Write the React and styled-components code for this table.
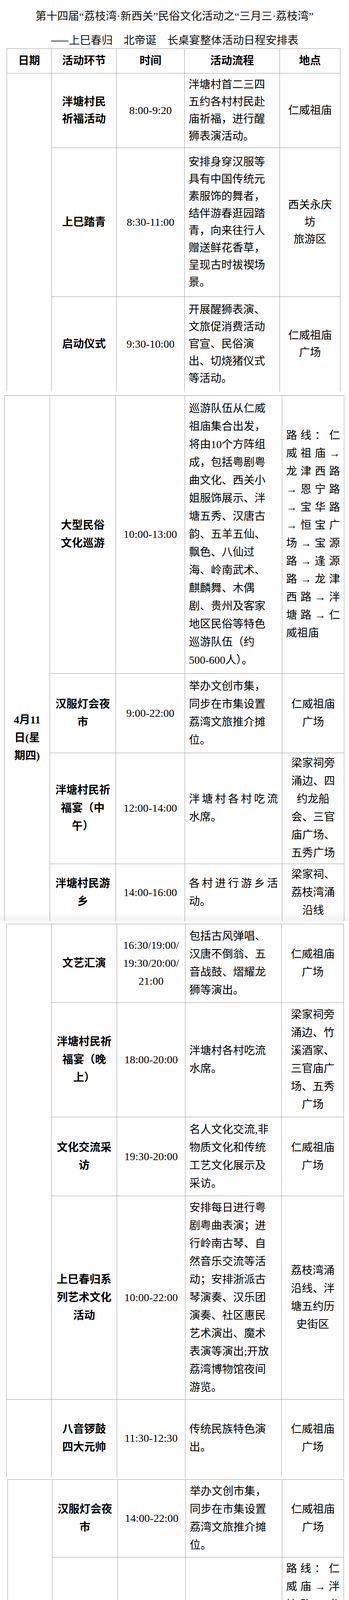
import React from 'react';
import styled, { createGlobalStyle, css } from 'styled-components';

const GlobalStyle = createGlobalStyle`
  html, body {
    margin: 0;
    padding: 0;
    background: #fff;
  }
  body {
    font-family: "Liberation Serif", "Noto Sans CJK SC", sans-serif;
    color: #000;
  }
`;

const j = (t) => ({ t, j: true });

const flowInterview = ['名人文化交流,非', '物质文化和传统', '工艺文化展示及', '采访。'];
const renwei = ['仁威祖庙', '广场'];
const routeSmall = ['路线：仁', '威庙→泮', '塘路→龙', '津桥→荔', '枝湾涌→', '至善桥→', '荔园→五', '秀桥→荔', '湾湖公园', '东门→泮', '塘路→仁'];

// 每一页是一段表格（原文档分页处断开）
const segments = [
  {
    gap: 0, left: 17, lh: 44, open: true, header: true,
    cols: [114, 167, 174, 244, 155],
    groups: [
      {
        rows: [
          { h: 191, step: ['泮塘村民', '祈福活动'], time: ['8:00-9:20'], flow: ['泮塘村首二三四', '五约各村村民赴', '庙祈福，进行醒', '狮表演活动。'], place: ['仁威祖庙'] },
          { h: 381, step: ['上巳踏青'], time: ['8:30-11:00'], flow: ['安排身穿汉服等', '具有中国传统元', '素服饰的舞者，', '结伴游春逛园踏', '青，向来往行人', '赠送鲜花香草，', '呈现古时祓禊场', '景。'], place: ['西关永庆', '坊', '旅游区'] },
          { h: 242, step: ['启动仪式'], time: ['9:30-10:00'], flow: ['开展醒狮表演、', '文旅促消费活动', '官宣、民俗演', '出、切烧猪仪式', '等活动。'], place: renwei },
        ],
      },
    ],
  },
  {
    gap: 10, left: 11, lh: 46, open: true, shade: true,
    cols: [116, 169, 177, 249, 159],
    groups: [
      {
        label: ['4月11', '日(星', '期四)'], pad: 807,
        rows: [
          {
            h: 712, step: ['大型民俗', '文化巡游'], time: ['10:00-13:00'],
            flow: ['巡游队伍从仁威', '祖庙集合出发，', '将由10个方阵组', '成，包括粤剧粤', '曲文化、西关小', '姐服饰展示、泮', '塘五秀、汉唐古', '韵、五羊五仙、', '飘色、八仙过', '海、岭南武术、', '麒麟舞、木偶', '剧、贵州及客家', '地区民俗等特色', '巡游队伍（约', '500-600人）。'],
            place: [j('路线：仁'), j('威祖庙→'), j('龙津西路'), j('→恩宁路'), j('→宝华路'), j('→恒宝广'), j('场→宝源'), j('路→逢源'), j('路→龙津'), j('西路→泮'), j('塘路→仁'), '威祖庙'],
            placeAlign: 'left',
          },
          { h: 203, step: ['汉服灯会夜', '市'], time: ['9:00-22:00'], flow: ['举办文创市集，', '同步在市集设置', '荔湾文旅推介摊', '位。'], place: renwei },
          { h: 284, step: ['泮塘村民祈', '福宴（中', '午）'], time: ['12:00-14:00'], flow: [j('泮塘村各村吃流'), '水席。'], place: ['梁家祠旁', '涌边、四', '约龙船', '会、三官', '庙广场、', '五秀广场'] },
          { h: 147, step: ['泮塘村民游', '乡'], time: ['14:00-16:00'], flow: [j('各村进行游乡活'), '动。'], place: ['梁家祠、', '荔枝湾涌', '沿线'] },
        ],
      },
    ],
  },
  {
    gap: 7, left: 16, lh: 46, open: true,
    cols: [115, 168, 175, 247, 159],
    groups: [
      {
        rows: [
          { h: 201, step: ['文艺汇演'], time: ['16:30/19:00/', '19:30/20:00/', '21:00'], flow: ['包括古风弹唱、', '汉唐不倒翁、五', '音战鼓、熠耀龙', '狮等演出。'], place: renwei },
          { h: 293, step: ['泮塘村民祈', '福宴（晚', '上）'], time: ['18:00-20:00'], flow: ['泮塘村各村吃流', '水席。'], place: ['梁家祠旁', '涌边、竹', '溪酒家、', '三官庙广', '场、五秀', '广场'] },
          { h: 202, step: ['文化交流采', '访'], time: ['19:30-20:00'], flow: flowInterview, place: renwei },
          { h: 521, step: ['上巳春归系', '列艺术文化', '活动'], time: ['10:00-22:00'], flow: ['安排每日进行粤', '剧粤曲表演；进', '行岭南古琴、自', '然音乐交流等活', '动；安排浙派古', '琴演奏、汉乐团', '演奏、社区惠民', '艺术演出、魔术', '表演等演出;开放', '荔湾博物馆夜间', '游览。'], place: ['荔枝湾涌', '沿线、泮', '塘五约历', '史街区'] },
        ],
      },
      {
        rows: [
          { h: 199, step: ['八音锣鼓', '四大元帅'], time: ['11:30-12:30'], flow: ['传统民族特色演', '出。'], place: renwei },
        ],
      },
    ],
  },
  {
    gap: 5, left: 19, lh: 46, open: true,
    cols: [114, 168, 174, 247, 158],
    groups: [
      {
        label: ['4月12', '日(星', '期五)'], pad: 873,
        rows: [
          { h: 199, step: ['汉服灯会夜', '市'], time: ['14:00-22:00'], flow: ['举办文创市集，', '同步在市集设置', '荔湾文旅推介摊', '位。'], place: renwei },
          {
            h: 566, step: ['小型民俗', '文化巡游'], time: ['14:30-16:00'], flow: ['三月三北帝诞传', '统文化巡游。', '（约150人）'],
            place: [...routeSmall.map(j), '威庙'], placeAlign: 'left',
          },
          { h: 294, step: ['文艺汇演'], time: ['16:00/18:00/', '19:00/19:20/', '20:00/21:00'], flow: ['包括八音锣鼓、', '新中式弹唱、汉', '唐不倒翁、五音', '战鼓、熠耀龙', '狮、敦煌舞蹈等', '演出。'], place: renwei },
          { h: 289, step: ['上巳春归长', '桌宴'], time: ['18:30-21:00'], flow: ['举办上巳春归长', '桌宴，搭建长桌', '宴空间，传承“聚', '宗亲，商族事，', '祈丰收，保平安”', '的传统风俗。'], place: ['泮塘五约', '街区'] },
        ],
      },
    ],
  },
  {
    gap: 8, left: 10, lh: 46, open: true,
    cols: [115, 171, 177, 249, 160],
    groups: [
      {
        rows: [
          { h: 202, step: ['文化交流采', '访'], time: ['19:30-20:00'], flow: flowInterview, place: renwei },
          { h: 527, step: ['上巳春归系', '列', '艺术文化活', '动'], time: ['10:00-22:00'], flow: ['安排每日三场粤', '剧粤曲表演；进', '行岭南古琴、自', '然音乐交流等活', '动；安排浙派古', '琴演奏、汉乐团', '演奏、社区惠民', '艺术演出、魔术', '表演等演出;开放', '荔湾博物馆夜间', '游览。'], place: ['荔枝湾涌', '沿线、泮', '塘五约历', '史街区'] },
        ],
      },
      {
        rows: [
          { h: 199, step: ['八音锣鼓', '四大元帅'], time: ['10:30-12:00'], flow: ['传统民族特色演', '出。'], place: renwei },
          { h: 203, step: ['汉服灯会夜', '市'], time: ['14:00-22:00'], flow: [j('举办文创市集，'), j('同步在市集设置'), j('荔湾文旅推介摊'), '位。'], place: renwei },
        ],
      },
    ],
  },
  {
    gap: 7, left: 11, lh: 46, open: true,
    cols: [117, 170, 175, 249, 160],
    groups: [
      {
        label: ['4月13', '日(星', '期六)'], pad: 508,
        rows: [
          { h: 570, step: ['小型民俗', '文化巡游'], time: ['14:30-16:00'], flow: [j('三月三北帝诞传'), j('统文化巡游。'), '（约150人）'], place: [...routeSmall, '威庙'] },
          { h: 295, step: ['文艺汇演'], time: ['16:00/18:00/', '19:00/19:30/', '20:00/21:00'], flow: ['包括八音锣鼓、', '新中式弹唱、汉', '唐不倒翁、鼓舞', '飞扬、熠耀龙', '狮、敦煌舞蹈等', '演出。'], place: renwei },
          { h: 202, step: ['文化交流采', '访'], time: ['19:30-20:00'], flow: flowInterview, place: renwei },
        ],
      },
    ],
  },
  {
    gap: 7, left: 13, lh: 46, open: false,
    cols: [115, 170, 175, 248, 157],
    groups: [
      {
        rows: [
          {
            h: 476, step: ['上巳春归系', '列', '艺术文化活', '动'], time: ['10:00-22:00'],
            flow: ['安排每日三场粤', '剧粤曲表演；进', '行岭南古琴、自', '然音乐交流等活', '动；安排浙派古', '琴演奏、汉乐团', '演奏、社区惠民', '艺术演出、等演', '出;开放荔湾博物', '馆夜间游览。'],
            place: [j('荔枝湾涌'), j('沿线、泮'), j('塘五约历'), '史街区'], placeAlign: 'left',
          },
        ],
      },
    ],
  },
];

const Lines = ({ lines }) =>
  lines.map((l, i) =>
    typeof l === 'string' ? <Line key={i}>{l}</Line> : <Line key={i} $justify>{l.t}</Line>
  );

const Segment = ({ seg }) => {
  const width = seg.cols.reduce((a, b) => a + b, 0);
  return (
    <Sheet $gap={seg.gap} $left={seg.left} $shade={seg.shade}>
      <Table $width={width} $open={seg.open} $lh={seg.lh}>
        <colgroup>
          {seg.cols.map((w, i) => (
            <Col key={i} $w={w} />
          ))}
        </colgroup>
        <tbody>
          {seg.header && (
            <Row $h={63}>
              {['日期', '活动环节', '时间', '活动流程', '地点'].map((t) => (
                <HeadCell key={t}>
                  <Line>{t}</Line>
                </HeadCell>
              ))}
            </Row>
          )}
          {seg.groups.map((g, gi) =>
            g.rows.map((r, ri) => (
              <Row key={`${gi}-${ri}`} $h={r.h}>
                {ri === 0 && (
                  <DateCell rowSpan={g.rows.length} $pad={g.pad || 0}>
                    {g.label && <Lines lines={g.label} />}
                  </DateCell>
                )}
                <StepCell>
                  <Lines lines={r.step} />
                </StepCell>
                <TimeCell>
                  <Lines lines={r.time} />
                </TimeCell>
                <FlowCell>
                  <Lines lines={r.flow} />
                </FlowCell>
                <PlaceCell $align={r.placeAlign}>
                  <Lines lines={r.place} />
                </PlaceCell>
              </Row>
            ))
          )}
        </tbody>
      </Table>
    </Sheet>
  );
};

const App = () => (
  <Page>
    <GlobalStyle />
    <Title>
      <TitleLine>第十四届“荔枝湾·新西关”民俗文化活动之“三月三·荔枝湾”</TitleLine>
      <TitleLine>
        <Dash>——</Dash>上巳春归　北帝诞　长桌宴整体活动日程安排表
      </TitleLine>
    </Title>
    {segments.map((s, i) => (
      <Segment key={i} seg={s} />
    ))}
  </Page>
);

const Page = styled.main`
  width: 894px;
  height: 7848px;
  overflow: hidden;
  background: #fff;
`;

const Title = styled.header`
  padding-top: 22px;
  margin-bottom: 3px;
  text-align: center;
  font-size: 28px;
  color: #111;
`;

const TitleLine = styled.div`
  height: 40px;
  line-height: 40px;
  white-space: nowrap;
  & + & {
    margin-top: 19px;
  }
`;

const Dash = styled.span`
  font-family: "Noto Sans CJK SC", sans-serif;
`;

const Sheet = styled.section`
  position: relative;
  margin-top: ${(p) => p.$gap}px;
  padding-left: ${(p) => p.$left}px;
  ${(p) =>
    p.$shade &&
    css`
      &::after {
        content: '';
        position: absolute;
        left: 0;
        right: 0;
        bottom: 0;
        height: 22px;
        background: linear-gradient(rgba(0, 0, 0, 0), rgba(0, 0, 0, 0.06));
        pointer-events: none;
      }
    `}
`;

const Table = styled.table`
  --lh: ${(p) => p.$lh}px;
  width: ${(p) => p.$width}px;
  table-layout: fixed;
  border-collapse: collapse;
  border-bottom: ${(p) => (p.$open ? 'hidden' : '1px solid #9c9c9c')};
  font-size: 28px;
  line-height: var(--lh);
`;

const Col = styled.col`
  width: ${(p) => p.$w}px;
`;

const Row = styled.tr`
  height: ${(p) => p.$h}px;
`;

const Cell = styled.td`
  border: 1px solid #9c9c9c;
  padding: 0 10px;
  vertical-align: middle;
  text-align: ${(p) => p.$align || 'center'};
`;

const HeadCell = styled(Cell)`
  font-weight: 700;
`;

const DateCell = styled(Cell)`
  vertical-align: top;
  padding: ${(p) => p.$pad}px 4px 0;
  font-weight: 700;
`;

const StepCell = styled(Cell)`
  padding: 0 6px;
  font-weight: 700;
`;

const TimeCell = styled(Cell)`
  padding: 0 2px;
`;

const FlowCell = styled(Cell)`
  text-align: left;
`;

const PlaceCell = styled(Cell)``;

const Line = styled.div`
  height: var(--lh);
  white-space: nowrap;
  ${(p) =>
    p.$justify &&
    css`
      text-align: justify;
      text-align-last: justify;
    `}
`;

export default App;
